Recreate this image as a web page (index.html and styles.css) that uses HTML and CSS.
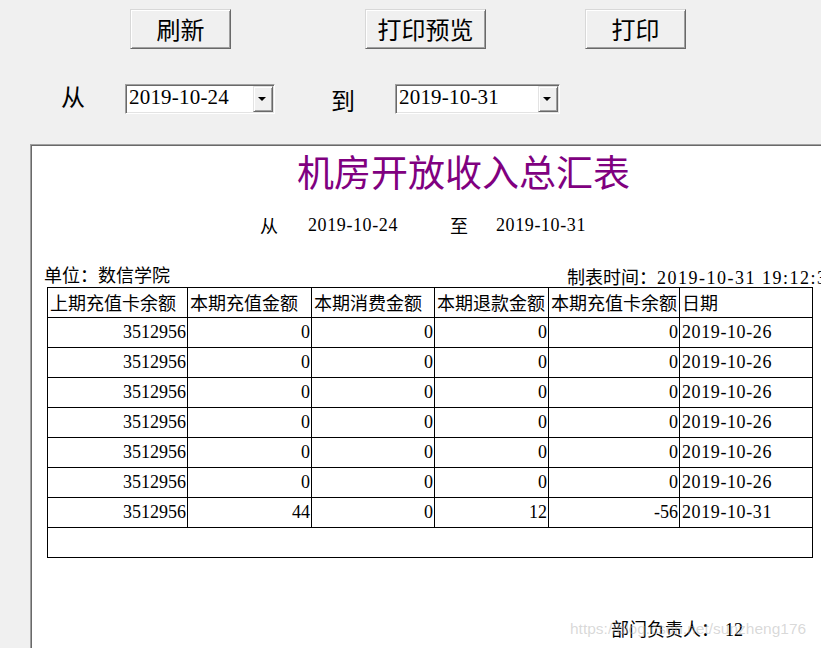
FILE: index.html
```html
<!DOCTYPE html>
<html lang="zh-CN">
<head>
<meta charset="utf-8">
<title>机房开放收入总汇表</title>
<link rel="stylesheet" href="styles.css">
</head>
<body>
<div class="toolbar">
  <button class="btn btn-refresh">刷新</button>
  <button class="btn btn-preview">打印预览</button>
  <button class="btn btn-print">打印</button>
</div>
<div class="daterow">
  <span class="lbl lbl-from">从</span>
  <div class="picker picker-from">
    <span class="val">2019-10-24</span>
    <span class="drop"><svg width="8" height="4" viewBox="0 0 8 4"><polygon points="0,0 8,0 4,4" fill="#000"/></svg></span>
  </div>
  <span class="lbl lbl-to">到</span>
  <div class="picker picker-to">
    <span class="val">2019-10-31</span>
    <span class="drop"><svg width="8" height="4" viewBox="0 0 8 4"><polygon points="0,0 8,0 4,4" fill="#000"/></svg></span>
  </div>
</div>
<div class="report">
  <div class="title">机房开放收入总汇表</div>
  <div class="range">
    <span class="r-from">从</span><span class="r-date1 dt">2019-10-24</span><span class="r-to">至</span><span class="dt">2019-10-31</span>
  </div>
  <div class="info">
    <span class="unit">单位：数信学院</span>
    <span class="made">制表时间：<span class="dt">2019-10-31 19:12:33</span></span>
  </div>
  <div class="grid">
    <div class="h">上期充值卡余额</div><div class="h">本期充值金额</div><div class="h">本期消费金额</div><div class="h">本期退款金额</div><div class="h">本期充值卡余额</div><div class="h">日期</div>
    <div class="n">3512956</div><div class="n">0</div><div class="n">0</div><div class="n">0</div><div class="n">0</div><div class="d">2019-10-26</div>
    <div class="n">3512956</div><div class="n">0</div><div class="n">0</div><div class="n">0</div><div class="n">0</div><div class="d">2019-10-26</div>
    <div class="n">3512956</div><div class="n">0</div><div class="n">0</div><div class="n">0</div><div class="n">0</div><div class="d">2019-10-26</div>
    <div class="n">3512956</div><div class="n">0</div><div class="n">0</div><div class="n">0</div><div class="n">0</div><div class="d">2019-10-26</div>
    <div class="n">3512956</div><div class="n">0</div><div class="n">0</div><div class="n">0</div><div class="n">0</div><div class="d">2019-10-26</div>
    <div class="n">3512956</div><div class="n">0</div><div class="n">0</div><div class="n">0</div><div class="n">0</div><div class="d">2019-10-26</div>
    <div class="n">3512956</div><div class="n">44</div><div class="n">0</div><div class="n">12</div><div class="n">-56</div><div class="d">2019-10-31</div>
    <div class="empty"></div>
  </div>
  <div class="sign"><span class="cjk">部门负责人：</span><span class="sign-val">12</span></div>
  <div class="stamp">2019-10-31 19:12</div>
  <div class="watermark">https://blog.csdn.net/sunzheng176</div>
</div>
</body>
</html>
```

FILE: styles.css
```css
html, body {
  margin: 0;
  height: 648px;
  overflow: hidden;
  background: #f0f0f0;
}
body {
  font-family: "Liberation Serif", "Noto Sans CJK SC", serif;
  color: #000;
}
.cjk, .lbl, .btn, .title, .h, .r-from, .r-to, .unit {
  font-family: "Noto Sans CJK SC", sans-serif;
}

/* toolbar */
.toolbar {
  display: flex;
  padding: 9px 0 0 130px;
  height: 40px;
}
.btn {
  height: 40px;
  box-sizing: border-box;
  font-size: 24px;
  line-height: 1;
  color: #000;
  background: #f0f0f0;
  border: 1px solid;
  border-color: #d8d8d8 #696969 #696969 #d8d8d8;
  box-shadow: inset 1px 1px #ffffff, inset -1px -1px #a0a0a0;
  padding: 0;
}
.btn-refresh { width: 101px; }
.btn-preview { width: 121px; margin-left: 134px; }
.btn-print { width: 101px; margin-left: 99px; }

/* date row */
.daterow {
  display: flex;
  align-items: flex-start;
  margin-top: 35px;
  height: 30px;
}
.lbl {
  font-size: 24px;
  line-height: 24px;
  width: 24px;
}
.lbl-from { margin-left: 61px; }
.lbl-to { margin-left: 56px; margin-top: 4px; }
.picker {
  display: flex;
  height: 30px;
  box-sizing: border-box;
  margin-left: 40px;
  border: 1px solid;
  border-color: #a0a0a0 #ffffff #ffffff #a0a0a0;
  box-shadow: inset 1px 1px #696969, inset -1px -1px #e3e3e3;
  background: #fff;
  padding: 1px;
}
.picker-from { width: 150px; }
.picker-to { width: 165px; }
.val {
  flex: 1;
  font-size: 21px;
  line-height: 23px;
  padding: 0 0 3px 2px;
  letter-spacing: 0.2px;
}
.drop {
  width: 20px;
  height: 26px;
  box-sizing: border-box;
  background: #f0f0f0;
  border: 1px solid;
  border-color: #e3e3e3 #696969 #696969 #e3e3e3;
  box-shadow: inset 1px 1px #fff, inset -1px -1px #a0a0a0;
  display: flex;
  align-items: center;
  justify-content: center;
  padding-right: 2px;
}
.drop svg { display: block; }

/* report */
.report {
  position: relative;
  margin: 30px 0 0 30px;
  width: 800px;
  height: 520px;
  background: #fff;
  border-left: 1px solid #a0a0a0;
  border-top: 1px solid #a0a0a0;
  box-shadow: inset 1px 1px #696969;
}
.title {
  padding: 6px 0 0 266px;
  font-size: 37px;
  line-height: 40px;
  color: #800080;
  white-space: nowrap;
}
.range {
  display: flex;
  margin-top: 22px;
  padding-left: 229px;
  font-size: 18px;
  line-height: 24px;
  white-space: nowrap;
}
.dt { letter-spacing: 0.6px; }
.r-from { width: 48px; }
.r-date1 { width: 142px; }
.r-to { width: 46px; }
.info {
  display: flex;
  margin-top: 25px;
  padding-left: 13px;
  height: 25px;
  font-size: 18px;
  line-height: 24px;
  white-space: nowrap;
}
.unit { width: 523px; flex: none; }
.made { padding-top: 2px; font-family: "Noto Sans CJK SC", sans-serif; }
.made .dt { font-family: "Liberation Serif", serif; letter-spacing: 1.5px; }

.grid {
  display: grid;
  grid-template-columns: 140px 124px 123px 114px 131px 133px;
  grid-auto-rows: 30px;
  width: max-content;
  margin-left: 16px;
  border-left: 1px solid #000;
  border-top: 1px solid #000;
  font-size: 18px;
}
.grid > div {
  box-sizing: border-box;
  border-right: 1px solid #000;
  border-bottom: 1px solid #000;
  line-height: 29px;
  white-space: nowrap;
  overflow: hidden;
}
.h { padding-left: 2px; }
.n { text-align: right; padding-right: 1px; }
.d { padding-left: 2px; letter-spacing: 0.6px; }
.grid > .empty { grid-column: 1 / -1; }

.sign {
  margin-top: 58px;
  padding-left: 580px;
  font-size: 18px;
  line-height: 24px;
  white-space: nowrap;
}
.sign-val { margin-left: 6px; }
.stamp {
  margin-top: 4px;
  padding-left: 564px;
  font-size: 14px;
  line-height: 16px;
  color: #f2a0a0;
  white-space: nowrap;
}
.watermark {
  position: absolute;
  left: 539px;
  top: 474px;
  font-family: "Liberation Sans", sans-serif;
  font-size: 15.5px;
  line-height: 20px;
  color: rgba(170, 170, 170, 0.45);
  white-space: nowrap;
}
```
